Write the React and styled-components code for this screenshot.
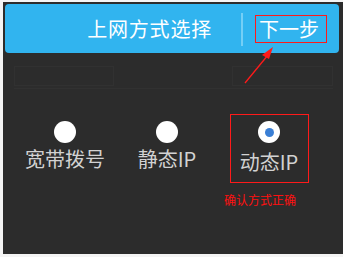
import React from 'react';
import styled, { createGlobalStyle } from 'styled-components';

const GlobalStyle = createGlobalStyle`
  html, body {
    margin: 0;
    padding: 0;
    background: #f4f4f4;
  }
  body {
    font-family: "Noto Sans CJK SC", "Noto Sans", sans-serif;
  }
`;

const Frame = styled.div`
  position: relative;
  box-sizing: border-box;
  margin: 2px 0 0 3px;
  width: 340px;
  height: 252px;
  padding: 2px 4px 0 2px;
  background: #2c2c2c;
  display: flex;
  flex-direction: column;
`;

const Header = styled.div`
  height: 49px;
  border-radius: 4px;
  background: #31b4ef;
  display: flex;
  align-items: center;
  justify-content: flex-end;
  padding-right: 12px;
`;

const Title = styled.div`
  color: #ffffff;
  font-size: 20px;
  letter-spacing: 0.8px;
  line-height: 24px;
`;

const Divider = styled.div`
  width: 2px;
  height: 33px;
  margin: 2px 12px 0 29px;
  background: #74cff6;
`;

const NextButton = styled.div`
  box-sizing: border-box;
  width: 72px;
  height: 28px;
  padding-left: 3px;
  border: 1px solid #ff1a1a;
  color: #ffffff;
  font-size: 20px;
  line-height: 26px;
`;

const GhostRow = styled.div`
  display: flex;
  justify-content: space-between;
  margin: 13px 6px 0 9px;
  padding-bottom: 2px;
  border-bottom: 1px solid #313131;
`;

const GhostCell = styled.div`
  width: ${p => p.$w}px;
  height: 18px;
  border: 1px solid #313131;
`;

const Options = styled.div`
  display: grid;
  grid-template-columns: repeat(3, 100px);
  column-gap: 2px;
  padding-left: 10px;
  margin-top: 25px;
`;

const Option = styled.div`
  box-sizing: border-box;
  justify-self: center;
  width: 79px;
  height: 69px;
  padding-top: 6px;
  display: flex;
  flex-direction: column;
  align-items: center;
  border: 1px solid ${p => (p.$selected ? '#ff1a1a' : 'transparent')};
`;

const Radio = styled.div`
  box-sizing: border-box;
  width: 22px;
  height: 22px;
  border-radius: 50%;
  background: #ffffff;
  display: flex;
  align-items: center;
  justify-content: center;

  &::after {
    content: '';
    display: ${p => (p.$checked ? 'block' : 'none')};
    width: 9px;
    height: 9px;
    border-radius: 50%;
    background: #3a7fd5;
  }
`;

const Label = styled.div`
  margin-top: ${p => (p.$selected ? 7 : 4)}px;
  color: #d2d2d2;
  font-size: 20px;
  line-height: 24px;
  white-space: nowrap;
`;

const Hint = styled.div`
  grid-column: 3;
  margin: 9px 0 0 5px;
  color: #ff1010;
  font-size: 12px;
  line-height: 16px;
`;

const Arrow = styled.svg`
  position: absolute;
  left: 0;
  top: 0;
  pointer-events: none;
`;

const choices = [
  { label: '宽带拨号', checked: false },
  { label: '静态IP', checked: false },
  { label: '动态IP', checked: true },
];

export default function App() {
  return (
    <>
      <GlobalStyle />
      <Frame>
        <Header>
          <Title>上网方式选择</Title>
          <Divider />
          <NextButton>下一步</NextButton>
        </Header>
        <GhostRow>
          <GhostCell $w={98} />
          <GhostCell $w={99} />
        </GhostRow>
        <Options>
          {choices.map(c => (
            <Option key={c.label} $selected={c.checked}>
              <Radio $checked={c.checked} />
              <Label $selected={c.checked}>{c.label}</Label>
            </Option>
          ))}
          <Hint>确认方式正确</Hint>
        </Options>
        <Arrow width="340" height="252" viewBox="0 0 340 252">
          <line x1="242" y1="81" x2="265" y2="53" stroke="#ff1a1a" strokeWidth="1.3" />
          <polygon points="270,45 259,53 266,57" fill="#ff1a1a" />
        </Arrow>
      </Frame>
    </>
  );
}
